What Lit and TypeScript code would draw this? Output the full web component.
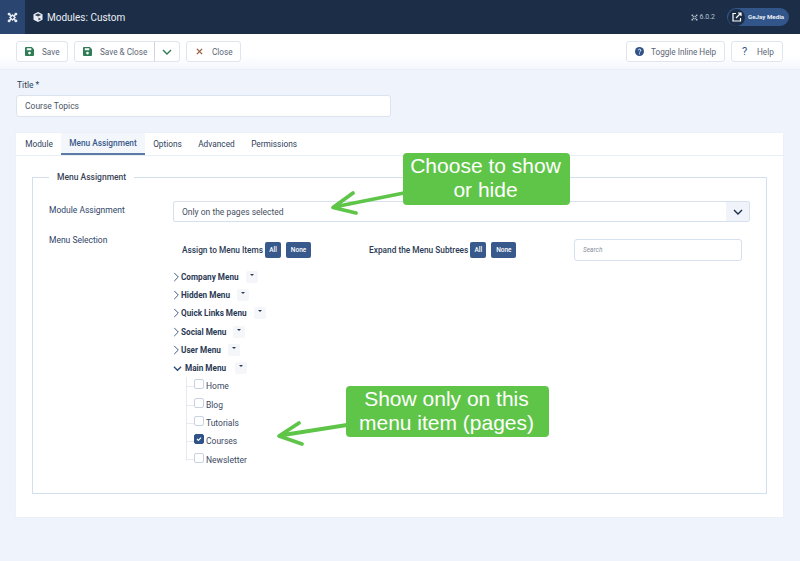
import { LitElement, html, css, svg } from "lit";
import { customElement } from "lit/decorators.js";

const chevDown = (c: string, w = 10) => html`<svg width=${w} height=${w} viewBox="0 0 10 10" fill="none" stroke=${c} stroke-width="1.4"><path d="M1 3l4 4 4-4"/></svg>`;
const chevRight = html`<svg class="cr" width="7" height="10" viewBox="0 0 7 11" fill="none" stroke="#2a4a7a" stroke-width="1"><path d="M1 1l4.500 4.500L1 10"/></svg>`;
const saveIcon = html`<svg width="9" height="9" viewBox="0 0 10 10"><path fill="#2f7d54" d="M1 0h6.500L10 2.500V9a1 1 0 0 1-1 1H1a1 1 0 0 1-1-1V1a1 1 0 0 1 1-1z"/><rect x="2" y="1.400" width="5" height="2.200" fill="#fff"/><circle cx="5" cy="6.700" r="1.500" fill="#fff"/></svg>`;
const joomla = (c: string, size: number) => html`<svg width=${size} height=${size} viewBox="0 0 12 12" fill="none" stroke=${c} stroke-width="1.500"><path d="M6 3.200L8.800 6 6 8.800 3.200 6z"/><path d="M2.800 2.800l1.800 1.800M9.200 2.800L7.400 4.600M2.800 9.200l1.800-1.800M9.200 9.200L7.400 7.400"/><circle cx="2.300" cy="2.300" r="1.600" fill=${c} stroke="none"/><circle cx="9.700" cy="2.300" r="1.600" fill=${c} stroke="none"/><circle cx="2.300" cy="9.700" r="1.600" fill=${c} stroke="none"/><circle cx="9.700" cy="9.700" r="1.600" fill=${c} stroke="none"/></svg>`;

@customElement("app-root")
export class AppRoot extends LitElement {
  static styles = css`
    :host { display: block; position: relative; width: 800px; height: 561px; overflow: hidden; background: #eff4fc; font-family: Roboto, "Liberation Sans", sans-serif; font-size: 8.5px; color: #22304a; }
    .header { height: 34px; background: #1c2d47; display: flex; align-items: center; color: #e8edf5; }
    .logo { width: 25px; height: 34px; background: #2a4670; display: flex; align-items: center; justify-content: center; }
    .title { display: flex; align-items: center; gap: 4px; margin-left: 8px; font-size: 10px; flex: 1; }
    .version { font-size: 7px; color: #b8c3d3; display: flex; gap: 2px; align-items: center; margin-right: 12px; }
    .user { width: 62px; height: 18px; border-radius: 9px; background: #32558a; margin-right: 11px; display: flex; align-items: center; font-size: 6.200px; font-weight: 700; gap: 3px; white-space: nowrap; }
    .user i { width: 17px; height: 17px; margin-left: 1px; border-radius: 50%; background: #1c2d47; display: flex; align-items: center; justify-content: center; flex: none; }
    .toolbar { height: 36px; box-sizing: border-box; padding: 7px 17px 8px 16px; display: flex; gap: 6px; background: linear-gradient(#fff 60%, #f4f7fc); border-bottom: 1px solid #e9eef7; }
    .btn { height: 21px; box-sizing: border-box; border: 1px solid #dfe5ef; border-radius: 3px; background: #fff; display: flex; align-items: center; color: #5c6675; font-size: 8.200px; }
    .btn .ic { display: flex; align-items: center; justify-content: center; }
    .spacer { flex: 1; }
    .label { margin: 10px 0 0 17px; line-height: 11px; font-size: 8.500px; color: #2f3f5c; }
    .input { margin: 4px 0 0 16px; width: 375px; height: 22px; box-sizing: border-box; border: 1px solid #dbe3ef; border-radius: 3px; background: #fff; padding-left: 8px; display: flex; align-items: center; color: #4c5665; }
    .card { margin: 16px 0 0 16px; width: 767px; height: 384px; box-sizing: border-box; background: #fff; box-shadow: 0 0 2px #e3e9f3; }
    .tabs { display: flex; height: 22px; border-bottom: 1px solid #e9eef7; font-size: 8.300px; padding-left: 1px; }
    .tab { padding: 0 8.200px; display: flex; align-items: center; color: #2f3f5c; }
    .tab.active { background: #f3f6fb; color: #3b5a8c; font-weight: 500; border-bottom: 2px solid #5d7aa6; height: 22px; box-sizing: border-box; }
    fieldset { margin: 16px 16px 0; height: 322px; box-sizing: border-box; border: 1px solid #d3dfee; padding: 0; position: relative; }
    legend { margin-left: 16px; padding: 0 8px; font-weight: 500; font-size: 8.500px; color: #3a4557; line-height: 11px; }
    .content { display: grid; grid-template-columns: 124px 577px; padding: 18px 0 0 16px; }
    .rowlabel { color: #2f4468; font-size: 8.500px; line-height: 19px; }
    .rowlabel.second { margin-top: 9px; }
    .select { height: 21px; box-sizing: border-box; border: 1px solid #d6e0ee; border-radius: 2px; display: flex; align-items: center; padding-left: 8px; color: #46505f; position: relative; }
    .select b { position: absolute; right: 0; top: 0; bottom: 0; width: 23px; background: #f0f4fa; display: flex; align-items: center; justify-content: center; }
    .tree { padding-top: 17px; }
    .actions { display: flex; align-items: center; height: 22px; font-weight: 500; font-size: 8.300px; color: #2b3a55; }
    .mini { height: 16px; background: #37598c; color: #fff; border-radius: 2px; font-size: 6.500px; display: flex; align-items: center; justify-content: center; font-weight: 500; }
    .mini.all { width: 16px; margin-left: 2px; }
    .mini.none { width: 25px; margin-left: 5px; }
    .expand { margin-left: 58px; }
    .assign { margin-left: 9px; }
    .search { margin-left: auto; margin-right: 8px; width: 168px; height: 22px; box-sizing: border-box; border: 1px solid #d6e0ee; border-radius: 3px; padding-left: 8px; display: flex; align-items: center; font-size: 6.500px; font-weight: 400; color: #8a919c; font-style: italic; }
    .menus { margin-top: 6.500px; }
    .menu { height: 18.300px; display: flex; align-items: center; gap: 1px; font-weight: 700; font-size: 8.200px; color: #2b3a55; }
    .menu.open { gap: 3px; }
    .caret { width: 12px; height: 12px; background: #f4f6fa; margin-left: 6px; border-radius: 2px; display: flex; align-items: flex-start; justify-content: center; }
    .caret::after { content: ""; margin-top: 3px; border: 2px solid transparent; border-top: 2px solid #2b3a55; }
    .items { margin-left: 13px; border-left: 1px solid #e6eaf1; height: 84px; }
    .item { height: 18.300px; display: flex; align-items: center; color: #3c4a62; gap: 2px; padding-left: 7px; position: relative; }
    .item::before { content: ""; position: absolute; left: 0; top: 9px; width: 7px; border-top: 1px solid #e6eaf1; }
    .cb { width: 8px; height: 8px; border: 1px solid #c8d2e2; border-radius: 2px; background: #fff; margin-top: -4px; display: flex; align-items: center; justify-content: center; }
    .cb.on { background: #2f5288; border-color: #2f5288; }
    .overlay { position: absolute; left: 0; top: 0; width: 800px; height: 561px; pointer-events: none; }
    .callout { position: absolute; box-sizing: border-box; background: #5fc548; color: #fff; border-radius: 4px; font-family: "Liberation Sans", sans-serif; font-size: 21px; line-height: 24px; text-align: center; display: flex; align-items: center; justify-content: center; padding: 0 2px 2px 0; }
    .c1 { left: 403px; top: 153px; width: 167px; height: 52px; }
    .c2 { left: 346px; top: 386px; width: 203px; height: 51px; }
  `;

  render() {
    const menus = ["Company Menu", "Hidden Menu", "Quick Links Menu", "Social Menu", "User Menu"];
    const items = ["Home", "Blog", "Tutorials", "Courses", "Newsletter"];
    return html`
      <div class="header">
        <div class="logo">${joomla("#e8edf5", 11)}</div>
        <div class="title">
          <svg width="10" height="10" viewBox="0 0 10 10"><path fill="#e8edf5" d="M5 0l4.500 2.200v5.600L5 10 .5 7.800V2.200z"/><path fill="#1c2d47" d="M5 4.600L1.800 3 5 1.400 8.200 3zM5.500 5.400v3l2.600-1.300z" opacity=".9"/></svg>
          Modules: Custom
        </div>
        <div class="version">${joomla("#b8c3d3", 7)}6.0.2</div>
        <div class="user"><i><svg width="10" height="10" viewBox="0 0 10 10" fill="none" stroke="#fff" stroke-width="1.200"><path d="M4 1.500H1v7.500h7.500V6M4 6l5-5M6 1h3v3"/></svg></i>GeJay Media</div>
      </div>
      <div class="toolbar">
        <div class="btn" style="width:52px"><span class="ic" style="width:25px">${saveIcon}</span>Save</div>
        <div class="btn" style="width:106px"><span class="ic" style="width:25px">${saveIcon}</span><span style="width:54px">Save &amp; Close</span><span class="ic" style="flex:1;align-self:stretch;border-left:1px solid #cfd6e2">${chevDown("#2f7d54")}</span></div>
        <div class="btn" style="width:55px"><span class="ic" style="width:25px"><svg width="7" height="7" viewBox="0 0 8 8" stroke="#9a5b44" stroke-width="1.500"><path d="M1 1l6 6M7 1L1 7"/></svg></span>Close</div>
        <div class="spacer"></div>
        <div class="btn" style="width:99px"><span class="ic" style="width:24px"><svg width="9" height="9" viewBox="0 0 10 10"><circle cx="5" cy="5" r="5" fill="#2f5288"/><path d="M3.700 3.800a1.400 1.400 0 1 1 1.900 1.300c-.4.200-.6.400-.6.900" stroke="#fff" fill="none"/><circle cx="5" cy="7.600" r=".6" fill="#fff"/></svg></span>Toggle Inline Help</div>
        <div class="btn" style="width:52px"><span class="ic" style="width:25px;color:#2f5288;font-size:11px">?</span>Help</div>
      </div>
      <div class="label">Title *</div>
      <div class="input">Course Topics</div>
      <div class="card">
        <div class="tabs">
          <div class="tab">Module</div>
          <div class="tab active">Menu Assignment</div>
          <div class="tab">Options</div>
          <div class="tab">Advanced</div>
          <div class="tab">Permissions</div>
        </div>
        <fieldset>
          <legend>Menu Assignment</legend>
          <div class="content">
            <div class="rowlabel">Module Assignment</div>
            <div class="select">Only on the pages selected<b>${chevDown("#1c2d47")}</b></div>
            <div class="rowlabel second">Menu Selection</div>
            <div class="tree">
              <div class="actions">
                <span class="assign">Assign to Menu Items</span><span class="mini all">All</span><span class="mini none">None</span>
                <span class="expand">Expand the Menu Subtrees</span><span class="mini all">All</span><span class="mini none">None</span>
                <div class="search">Search</div>
              </div>
              <div class="menus">
                ${menus.map((m) => html`<div class="menu">${chevRight}<span>${m}</span><span class="caret"></span></div>`)}
                <div class="menu open">${chevDown("#2a4a7a", 9)}<span>Main Menu</span><span class="caret"></span></div>
                <div class="items">
                  ${items.map((i) => html`<div class="item"><span class="cb ${i === "Courses" ? "on" : ""}">${i === "Courses" ? html`<svg width="6" height="6" viewBox="0 0 6 6" fill="none" stroke="#fff" stroke-width="1.100"><path d="M1 3l1.400 1.400L5 1.600"/></svg>` : ""}</span>${i}</div>`)}
                </div>
              </div>
            </div>
          </div>
        </fieldset>
      </div>
      <svg class="overlay" viewBox="0 0 800 561" fill="none" stroke="#5fc548" stroke-width="3.800" stroke-linecap="round" stroke-linejoin="round">
        ${svg`<path d="M404 193L334 207M353 193L333 207.500L356 213"/><path d="M347 425L280 435.500M299 423L279 436L302 444"/>`}
      </svg>
      <div class="callout c1">Choose to show<br />or hide</div>
      <div class="callout c2">Show only on this<br />menu item (pages)</div>
    `;
  }
}
